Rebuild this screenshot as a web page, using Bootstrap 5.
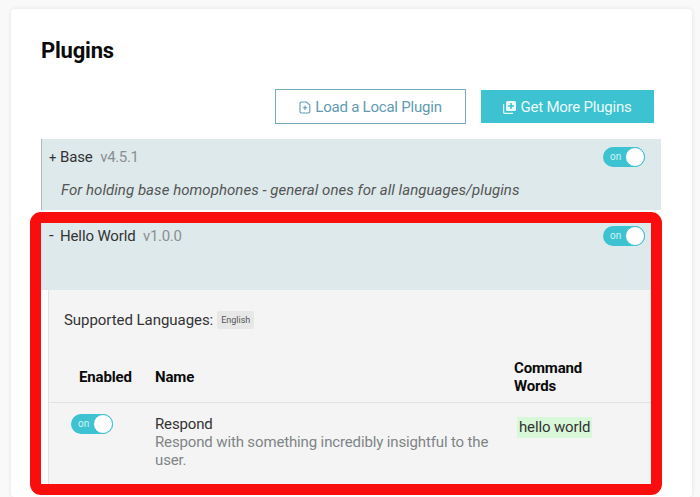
<!doctype html>
<html lang="en"><head><meta charset="utf-8">
<link href="https://cdn.jsdelivr.net/npm/bootstrap@5.3.0/dist/css/bootstrap.min.css" rel="stylesheet">
<style>
html,body{height:497px;overflow:hidden}
body{background:#f9f9f9;font-family:Roboto,"Liberation Sans",sans-serif;font-size:15px;letter-spacing:-.14px;color:#333;position:relative}
.shell{margin:9px 8px 0 11px;background:#fff;border-radius:4px;box-shadow:0 0 4px rgba(0,0,0,.1);padding:30px 31px 0 30px;height:488px;overflow:hidden}
.shell h1{font-size:22px;font-weight:700;color:#0b0b0b;line-height:24px;margin:0 0 26px;letter-spacing:-.2px}
.acts{padding-right:7px;gap:15px;margin-bottom:15px}
.btn.act{border-radius:0;font-size:15px;height:35px;display:flex;align-items:center;justify-content:center;gap:4px;padding:2px 0 0;letter-spacing:-.22px}
.act-out{width:191px;border:1px solid #78aabd;color:#5f9ab3;background:#fff}
.act-fill{width:173px;height:33px!important;margin-top:1px;background:#3cc2d0;color:#eafafb;border:0}
.plug{background:#dde9eb}
.plug-base{border-left:1px solid #b4b8b9;height:71px;padding:8px 16px 0 7px;margin-bottom:13px}
.plug-hello{height:67px;padding:3px 16px 0 8px}
.plug-line{height:20px;line-height:20px;color:#333}
.ver{color:#8b8f91;margin-left:4px;letter-spacing:-.35px}
.mk{display:inline-block;width:11px;font-size:13px;line-height:1}
.mk-minus{font-size:17px}
.descr{font-style:italic;color:#555;margin:13px 0 0 12px;line-height:20px;letter-spacing:.05px}
.tog{width:42px;height:20px;border-radius:10px;background:#3cc2d0;position:relative;color:#d5f3f6;font-size:10px;line-height:20px;padding-left:7px;letter-spacing:0;flex:none}
.tog::after{content:"";position:absolute;right:0;top:0;width:20px;height:20px;border-radius:50%;background:#fff;border:1px solid #3cc2d0}
.panel{margin-left:7px;border-left:1px solid #e2e2e2;background:#f4f4f4;height:200px;padding-top:21px}
.langs{padding-left:15px;line-height:18px;color:#333;display:flex;align-items:center;gap:4px;letter-spacing:-.05px}
.lang-tag{font-size:9px;background:#e7e7e7;color:#555;padding:0 4px;border-radius:2px;line-height:18px;letter-spacing:0}
.tbl{width:100%;table-layout:fixed;margin-top:30px}
.tbl th{font-weight:700;color:#0b0b0b;line-height:18px;vertical-align:middle;padding:0 0 7px;border-bottom:1px solid #e2e2e2}
.tbl td{vertical-align:top;padding:0;line-height:18px}
.col-en{width:90px}.col-nm{width:359px}
.tbl th.col-en{padding-left:30px}
.tbl th.col-nm,.tbl td.cell-nm{padding-left:16px}
.tbl th.col-cw{padding-left:16px}
.cell-en{padding:11px 0 0 22px!important}
.cell-nm{padding-top:12px!important}
.cell-cw{padding:14px 0 0 19px!important}
.sub{color:#808486}
.rname{color:#333}
.word{display:inline-block;background:#d9f8d9;color:#333;padding:0 2px;line-height:21px}
.anno{position:absolute;left:30px;top:212px;width:632px;height:283px;border:11px solid #f90d0d;border-radius:11px;pointer-events:none}
</style></head><body>
<div class="shell">
<h1>Plugins</h1>
<div class="d-flex justify-content-end acts">
<a class="btn act act-out" href="#"><svg width="12" height="13" viewBox="0 0 12 13" fill="none" stroke="currentColor" stroke-width="1.1"><path d="M2.5 1h5L10.8 4v6.5a1.5 1.5 0 0 1-1.5 1.5h-6.8A1.5 1.5 0 0 1 1 10.500V2.500A1.500 1.500 0 0 1 2.500 1zM6 4.500v4.500M3.800 6.800h4.400"/></svg>Load a Local Plugin</a>
<a class="btn act act-fill" href="#"><svg width="13" height="13" viewBox="0 0 13 13"><path fill="currentColor" fill-rule="evenodd" d="M4.500 0h7A1.500 1.500 0 0 1 13 1.500v7a1.500 1.500 0 0 1-1.500 1.500h-7A1.500 1.500 0 0 1 3 8.500v-7A1.500 1.500 0 0 1 4.500 0zM7.300 2v2.200H5.100v1.500h2.200v2.200h1.500V5.700h2.200V4.200H8.800V2z"/><path fill="none" stroke="currentColor" stroke-width="1.200" d="M.6 3v8A1.400 1.400 0 0 0 2 12.400h8"/></svg>Get More Plugins</a>
</div>
<div class="plug plug-base">
<div class="d-flex justify-content-between plug-line"><span><span class="mk">+</span>Base <span class="ver">v4.5.1</span></span><span class="tog">on</span></div>
<p class="descr">For holding base homophones - general ones for all languages/plugins</p>
</div>
<div class="plug plug-hello">
<div class="d-flex justify-content-between plug-line"><span><span class="mk mk-minus">-</span>Hello World <span class="ver">v1.0.0</span></span><span class="tog">on</span></div>
</div>
<div class="panel">
<div class="langs">Supported Languages: <span class="lang-tag">English</span></div>
<table class="tbl"><thead><tr><th class="col-en">Enabled</th><th class="col-nm">Name</th><th class="col-cw">Command<br>Words</th></tr></thead>
<tbody><tr><td class="cell-en"><div class="tog">on</div></td><td class="cell-nm"><div class="rname">Respond</div><div class="sub">Respond with something incredibly insightful to the user.</div></td><td class="cell-cw"><span class="word">hello world</span></td></tr></tbody></table>
</div>
</div>
<div class="anno"></div>
</body></html>
